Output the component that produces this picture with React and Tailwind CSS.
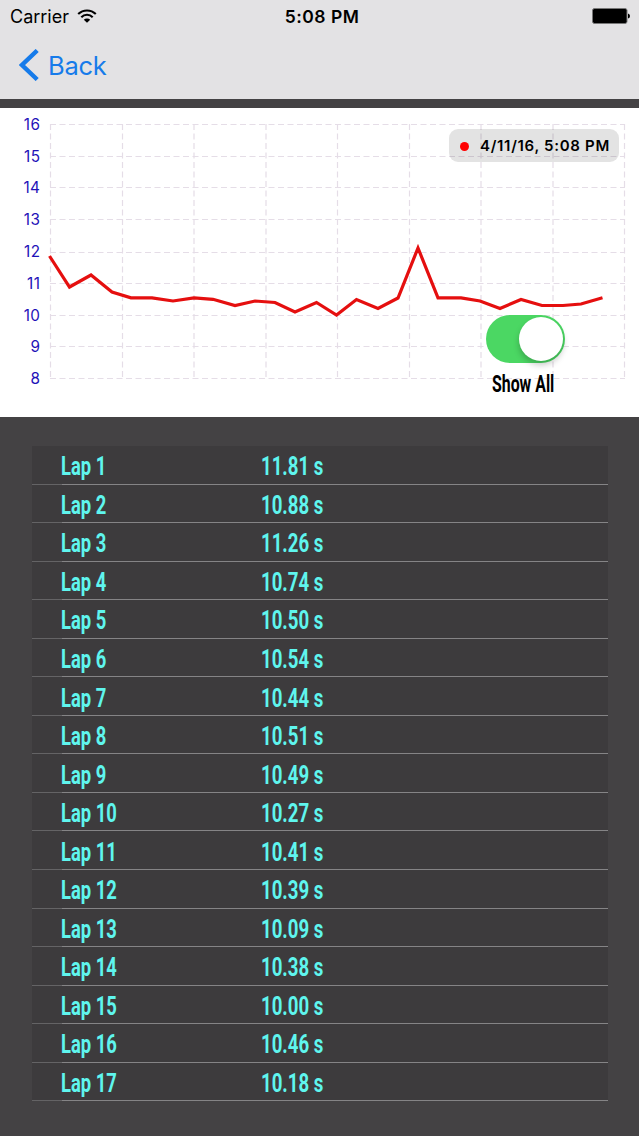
import React from "react";

const laps = [
  "11.81", "10.88", "11.26", "10.74", "10.50", "10.54", "10.44", "10.51", "10.49",
  "10.27", "10.41", "10.39", "10.09", "10.38", "10.00", "10.46", "10.18",
];

const gridX = [50.5, 122.5, 194, 266, 337.5, 409.5, 481, 553, 624.5];
const gridY = [16.5, 48.5, 79.5, 111.5, 144.5, 175.5, 207.5, 238.5, 270.5];

const series =
  "49.5,148 69.5,179 91,167 112,184 131,189.8 152,189.8 173,193 194,189.8 213,191.3 235,197.5 255,193 275,194.5 295,204 316.5,194.5 336.5,207 356.5,191.5 378,200.5 398,190 418,140 438,189.8 461,189.8 480,193 500,200.5 521,191.5 542,197.5 563,197.5 581,196 602.5,189.8";

function StatusBar() {
  return (
    <div className="flex h-8 items-center justify-between pr-[9px] pl-[10px]">
      <div className="flex w-60 items-center gap-[8px] text-[18px] leading-8">
        <span className="relative top-px">Carrier</span>
        <svg width="20" height="14" viewBox="0 0 20 14" fill="none">
          <path d="M1.2 5.1A12.4 12.4 0 0 1 18.8 5.1" stroke="#000" strokeWidth="2.1" />
          <path d="M4.3 8.2A8 8 0 0 1 15.7 8.2" stroke="#000" strokeWidth="2.1" />
          <path d="M10 13.7L6.8 10.7A4.6 4.6 0 0 1 13.2 10.7Z" fill="#000" />
        </svg>
      </div>
      <span className="relative top-px left-[2px] text-[17.5px] font-semibold tracking-[0.5px]">5:08 PM</span>
      <div className="flex w-60 justify-end">
        <svg width="38" height="16" viewBox="0 0 38 16">
          <rect x="0.5" y="0.5" width="34.5" height="15" rx="2" fill="#000" stroke="#777" />
          <path d="M36 5.5Q38 6 38 8Q38 10 36 10.5Z" fill="#000" />
        </svg>
      </div>
    </div>
  );
}

function Chart() {
  return (
    <section className="relative h-[308.5px] bg-white">
      <svg width="639" height="308" className="block">
        <g stroke="#e5dde7" strokeWidth="1.2" strokeDasharray="6 3.5">
          {gridX.map((x) => (
            <line key={x} x1={x} x2={x} y1="16" y2="271" />
          ))}
          {gridY.map((y) => (
            <line key={y} x1="50" x2="625" y1={y} y2={y} />
          ))}
        </g>
        <g fill="#1f12b8" fontSize="15.3" letterSpacing="0.5" textAnchor="end">
          {gridY.map((y, i) => (
            <text key={y} x="40.5" y={21.8 + i * 31.8}>{16 - i}</text>
          ))}
        </g>
        <polyline points={series} fill="none" stroke="#e50f0f" strokeWidth="3.2" strokeMiterlimit="10" />
      </svg>
      <div className="absolute top-[21px] left-[449px] flex h-[33px] w-[170px] items-center rounded-[9px] bg-[#000000]/11 pl-[11px]">
        <span className="relative top-[0.5px] size-[9px] rounded-full bg-[#ff0000]" />
        <span className="relative top-[0.5px] ml-[11px] text-[15px] font-semibold tracking-[0.7px] whitespace-nowrap">4/11/16, 5:08 PM</span>
      </div>
      <div className="absolute top-[207px] left-[486px] flex h-12 w-[79px] justify-end rounded-full bg-[#4bd763] p-[2px]">
        <span className="size-11 rounded-full bg-white shadow-[0_4px_6px_rgba(0,0,0,0.22)]" />
      </div>
      <span className="absolute top-[264px] left-[492px] origin-left scale-x-[0.69] font-['Roboto'] text-[23px] leading-[26px] font-bold whitespace-nowrap">
        Show All
      </span>
    </section>
  );
}

function LapRow({ number, time }) {
  return (
    <li className="flex h-[38.56px]">
      <div className="w-[30px] border-b border-[#646365]" />
      <div className="flex flex-1 items-center border-b border-[#858486] pt-1 font-['Roboto'] text-[25px] leading-none font-bold text-[#5ff5ee]">
        <span className="-ml-px w-[200px] whitespace-nowrap">
          <span className="inline-block origin-left scale-x-[0.735]">Lap {number}</span>
        </span>
        <span className="inline-block origin-left scale-x-[0.745] whitespace-nowrap">{time} s</span>
      </div>
    </li>
  );
}

export default function App() {
  return (
    <main className="flex h-[1136px] w-[639px] flex-col overflow-hidden bg-[#444244] font-['Inter',sans-serif] text-black">
      <header className="mb-[9.5px] h-[98.5px] shrink-0 bg-[#e3e2e4]">
        <StatusBar />
        <button className="flex h-[68px] items-center pl-[19px] text-[#167bea]">
          <svg width="20" height="32" viewBox="0 0 20 32" fill="none" className="relative -top-px">
            <path d="M18.2 1.5L3 16L18.2 30.5" stroke="currentColor" strokeWidth="4.4" />
          </svg>
          <span className="ml-[9px] text-[25.5px] tracking-[-0.3px]">Back</span>
        </button>
      </header>
      <Chart />
      <ul className="mt-[29.5px] ml-8 w-[576px] bg-[#3d3b3d]">
        {laps.map((time, i) => (
          <LapRow key={i} number={i + 1} time={time} />
        ))}
      </ul>
    </main>
  );
}
